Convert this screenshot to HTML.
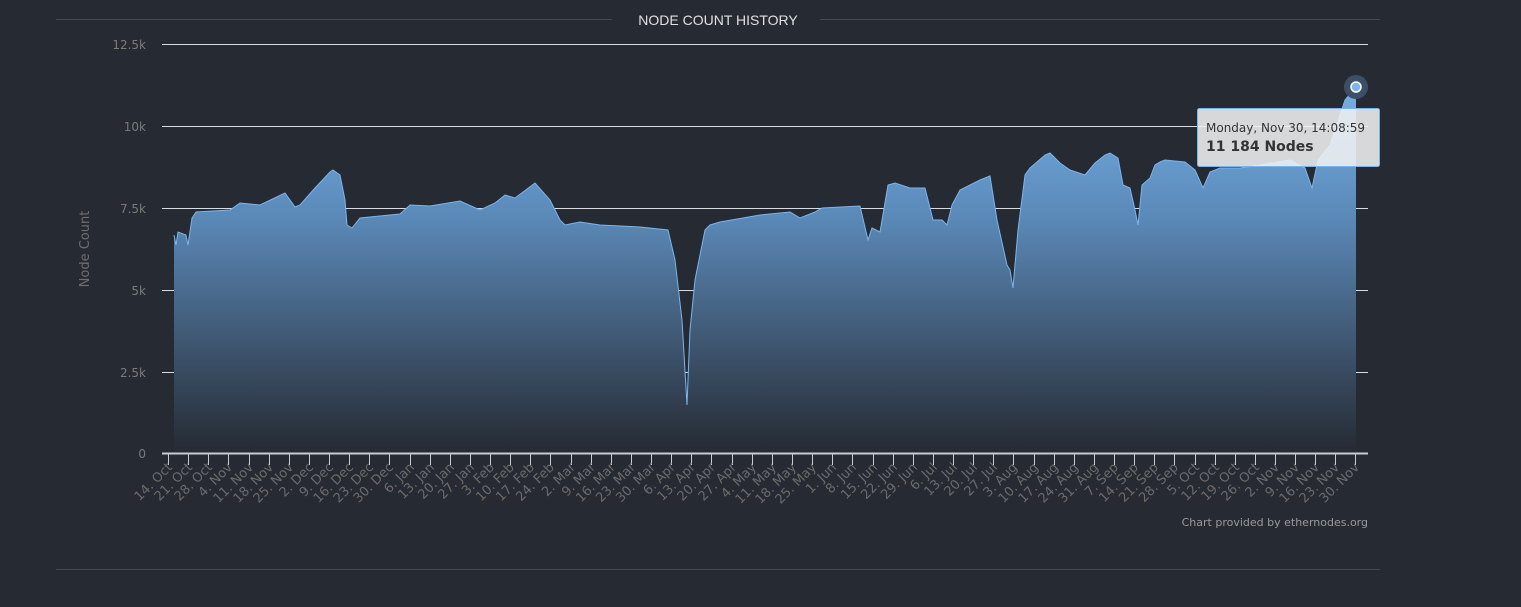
<!DOCTYPE html>
<html><head><meta charset="utf-8"><style>
html,body{margin:0;padding:0;background:#262a33;width:1521px;height:607px;overflow:hidden;font-family:"Liberation Sans","DejaVu Sans",sans-serif;}
</style></head><body>
<svg width="1521" height="607" xmlns="http://www.w3.org/2000/svg" font-family="DejaVu Sans, Liberation Sans, sans-serif">
<defs>
<linearGradient id="g" x1="0" y1="0" x2="0" y2="1">
<stop offset="0" stop-color="#75aee6"/>
<stop offset="0.35" stop-color="#5b8ab9"/>
<stop offset="1" stop-color="#262a33"/>
</linearGradient>
</defs>
<line x1="56" y1="19.5" x2="612" y2="19.5" stroke="#444852"/>
<line x1="820" y1="19.5" x2="1380" y2="19.5" stroke="#444852"/>
<text x="718" y="25" text-anchor="middle" font-family="Liberation Sans, sans-serif" font-size="14" fill="#e0e0e0">NODE COUNT HISTORY</text>
<line x1="56" y1="569.5" x2="1380" y2="569.5" stroke="#444852"/>
<g stroke="#d8dbe0" stroke-width="1">
<line x1="162" y1="44.5" x2="1368" y2="44.5"/>
<line x1="162" y1="126.5" x2="1368" y2="126.5"/>
<line x1="162" y1="208.5" x2="1368" y2="208.5"/>
<line x1="162" y1="290.5" x2="1368" y2="290.5"/>
<line x1="162" y1="372.5" x2="1368" y2="372.5"/>
</g>
<g font-size="12" fill="#7a7a7a" text-anchor="end">
<text x="146" y="49">12.5k</text><text x="146" y="131">10k</text><text x="146" y="213">7.5k</text><text x="146" y="295">5k</text><text x="146" y="377">2.5k</text><text x="146" y="458">0</text>
</g>
<text transform="translate(89,249) rotate(-90)" text-anchor="middle" font-size="13" fill="#6e6e6e">Node Count</text>
<path id="d" fill="url(#g)" stroke="none" d="M174,453 L174,235 176,245 178,232 186,235 188,245 192,218 196,212 230,210 240,203 260,205 285,193 295,207 300,205 315,188 330,172 333,170 340,175 345,200 347,225 352,228 360,218 400,214 410,205 430,206 460,201 480,210 495,203 505,195 515,198 535,183 550,200 560,220 565,225 580,222 600,225 640,227 668,230 675,260 682,320 687,405 690,330 695,280 705,230 710,225 720,222 760,215 790,212 800,218 815,212 822,208 860,206 868,240 872,228 880,232 888,185 895,183 910,188 925,188 933,220 942,220 947,225 952,205 960,190 980,180 990,176 997,220 1007,265 1010,270 1013,288 1018,230 1025,175 1030,168 1045,155 1050,153 1060,163 1070,170 1085,175 1095,163 1105,155 1110,153 1118,158 1123,185 1130,188 1135,210 1138,225 1142,185 1150,178 1155,165 1160,162 1165,160 1185,162 1195,170 1203,188 1210,172 1220,168 1240,168 1260,165 1290,160 1305,168 1312,188 1318,160 1330,145 1345,100 1356,87 L1356,453 Z"/>
<polyline fill="none" stroke="#7cb5ec" stroke-width="1" points="174,235 176,245 178,232 186,235 188,245 192,218 196,212 230,210 240,203 260,205 285,193 295,207 300,205 315,188 330,172 333,170 340,175 345,200 347,225 352,228 360,218 400,214 410,205 430,206 460,201 480,210 495,203 505,195 515,198 535,183 550,200 560,220 565,225 580,222 600,225 640,227 668,230 675,260 682,320 687,405 690,330 695,280 705,230 710,225 720,222 760,215 790,212 800,218 815,212 822,208 860,206 868,240 872,228 880,232 888,185 895,183 910,188 925,188 933,220 942,220 947,225 952,205 960,190 980,180 990,176 997,220 1007,265 1010,270 1013,288 1018,230 1025,175 1030,168 1045,155 1050,153 1060,163 1070,170 1085,175 1095,163 1105,155 1110,153 1118,158 1123,185 1130,188 1135,210 1138,225 1142,185 1150,178 1155,165 1160,162 1165,160 1185,162 1195,170 1203,188 1210,172 1220,168 1240,168 1260,165 1290,160 1305,168 1312,188 1318,160 1330,145 1345,100 1356,87"/>
<line x1="162" y1="453.5" x2="1368" y2="453.5" stroke="#c8ccd4" stroke-width="2"/>
<g stroke="#c8ccd4" stroke-width="1">
<path d="M168.5,453V465M188.5,453V465M208.5,453V465M228.5,453V465M249.5,453V465M269.5,453V465M289.5,453V465M309.5,453V465M329.5,453V465M349.5,453V465M369.5,453V465M389.5,453V465M410.5,453V465M430.5,453V465M450.5,453V465M470.5,453V465M490.5,453V465M510.5,453V465M530.5,453V465M550.5,453V465M571.5,453V465M591.5,453V465M611.5,453V465M631.5,453V465M651.5,453V465M671.5,453V465M691.5,453V465M711.5,453V465M732.5,453V465M752.5,453V465M772.5,453V465M792.5,453V465M812.5,453V465M832.5,453V465M852.5,453V465M873.5,453V465M893.5,453V465M913.5,453V465M933.5,453V465M953.5,453V465M973.5,453V465M993.5,453V465M1013.5,453V465M1034.5,453V465M1054.5,453V465M1074.5,453V465M1094.5,453V465M1114.5,453V465M1134.5,453V465M1154.5,453V465M1174.5,453V465M1195.5,453V465M1215.5,453V465M1235.5,453V465M1255.5,453V465M1275.5,453V465M1295.5,453V465M1315.5,453V465M1335.5,453V465M1355.5,453V465"/>
</g>
<g font-size="13" fill="#6b6b6b" text-anchor="end">
<text transform="translate(173,468) rotate(-45)">14. Oct</text>
<text transform="translate(193,468) rotate(-45)">21. Oct</text>
<text transform="translate(213,468) rotate(-45)">28. Oct</text>
<text transform="translate(233,468) rotate(-45)">4. Nov</text>
<text transform="translate(254,468) rotate(-45)">11. Nov</text>
<text transform="translate(274,468) rotate(-45)">18. Nov</text>
<text transform="translate(294,468) rotate(-45)">25. Nov</text>
<text transform="translate(314,468) rotate(-45)">2. Dec</text>
<text transform="translate(334,468) rotate(-45)">9. Dec</text>
<text transform="translate(354,468) rotate(-45)">16. Dec</text>
<text transform="translate(374,468) rotate(-45)">23. Dec</text>
<text transform="translate(394,468) rotate(-45)">30. Dec</text>
<text transform="translate(415,468) rotate(-45)">6. Jan</text>
<text transform="translate(435,468) rotate(-45)">13. Jan</text>
<text transform="translate(455,468) rotate(-45)">20. Jan</text>
<text transform="translate(475,468) rotate(-45)">27. Jan</text>
<text transform="translate(495,468) rotate(-45)">3. Feb</text>
<text transform="translate(515,468) rotate(-45)">10. Feb</text>
<text transform="translate(535,468) rotate(-45)">17. Feb</text>
<text transform="translate(555,468) rotate(-45)">24. Feb</text>
<text transform="translate(576,468) rotate(-45)">2. Mar</text>
<text transform="translate(596,468) rotate(-45)">9. Mar</text>
<text transform="translate(616,468) rotate(-45)">16. Mar</text>
<text transform="translate(636,468) rotate(-45)">23. Mar</text>
<text transform="translate(656,468) rotate(-45)">30. Mar</text>
<text transform="translate(676,468) rotate(-45)">6. Apr</text>
<text transform="translate(696,468) rotate(-45)">13. Apr</text>
<text transform="translate(716,468) rotate(-45)">20. Apr</text>
<text transform="translate(737,468) rotate(-45)">27. Apr</text>
<text transform="translate(757,468) rotate(-45)">4. May</text>
<text transform="translate(777,468) rotate(-45)">11. May</text>
<text transform="translate(797,468) rotate(-45)">18. May</text>
<text transform="translate(817,468) rotate(-45)">25. May</text>
<text transform="translate(837,468) rotate(-45)">1. Jun</text>
<text transform="translate(857,468) rotate(-45)">8. Jun</text>
<text transform="translate(878,468) rotate(-45)">15. Jun</text>
<text transform="translate(898,468) rotate(-45)">22. Jun</text>
<text transform="translate(918,468) rotate(-45)">29. Jun</text>
<text transform="translate(938,468) rotate(-45)">6. Jul</text>
<text transform="translate(958,468) rotate(-45)">13. Jul</text>
<text transform="translate(978,468) rotate(-45)">20. Jul</text>
<text transform="translate(998,468) rotate(-45)">27. Jul</text>
<text transform="translate(1018,468) rotate(-45)">3. Aug</text>
<text transform="translate(1039,468) rotate(-45)">10. Aug</text>
<text transform="translate(1059,468) rotate(-45)">17. Aug</text>
<text transform="translate(1079,468) rotate(-45)">24. Aug</text>
<text transform="translate(1099,468) rotate(-45)">31. Aug</text>
<text transform="translate(1119,468) rotate(-45)">7. Sep</text>
<text transform="translate(1139,468) rotate(-45)">14. Sep</text>
<text transform="translate(1159,468) rotate(-45)">21. Sep</text>
<text transform="translate(1179,468) rotate(-45)">28. Sep</text>
<text transform="translate(1200,468) rotate(-45)">5. Oct</text>
<text transform="translate(1220,468) rotate(-45)">12. Oct</text>
<text transform="translate(1240,468) rotate(-45)">19. Oct</text>
<text transform="translate(1260,468) rotate(-45)">26. Oct</text>
<text transform="translate(1280,468) rotate(-45)">2. Nov</text>
<text transform="translate(1300,468) rotate(-45)">9. Nov</text>
<text transform="translate(1320,468) rotate(-45)">16. Nov</text>
<text transform="translate(1340,468) rotate(-45)">23. Nov</text>
<text transform="translate(1360,468) rotate(-45)">30. Nov</text>
</g>
<text x="1368" y="526" text-anchor="end" font-size="11" fill="#9a9a9a">Chart provided by ethernodes.org</text>
<circle cx="1356" cy="87" r="12" fill="#3d4f66"/>
<circle cx="1356" cy="87" r="5" fill="#7cb5ec" stroke="#ffffff" stroke-width="1.5"/>
<rect x="1197.5" y="108.5" width="182" height="58" rx="2" fill="#f0f0f0" fill-opacity="0.88" stroke="#7cb5ec"/>
<text x="1206" y="132" font-size="12" fill="#333">Monday, Nov 30, 14:08:59</text>
<text x="1206" y="151" font-size="14" font-weight="bold" fill="#333">11 184 Nodes</text>
</svg>
</body></html>
